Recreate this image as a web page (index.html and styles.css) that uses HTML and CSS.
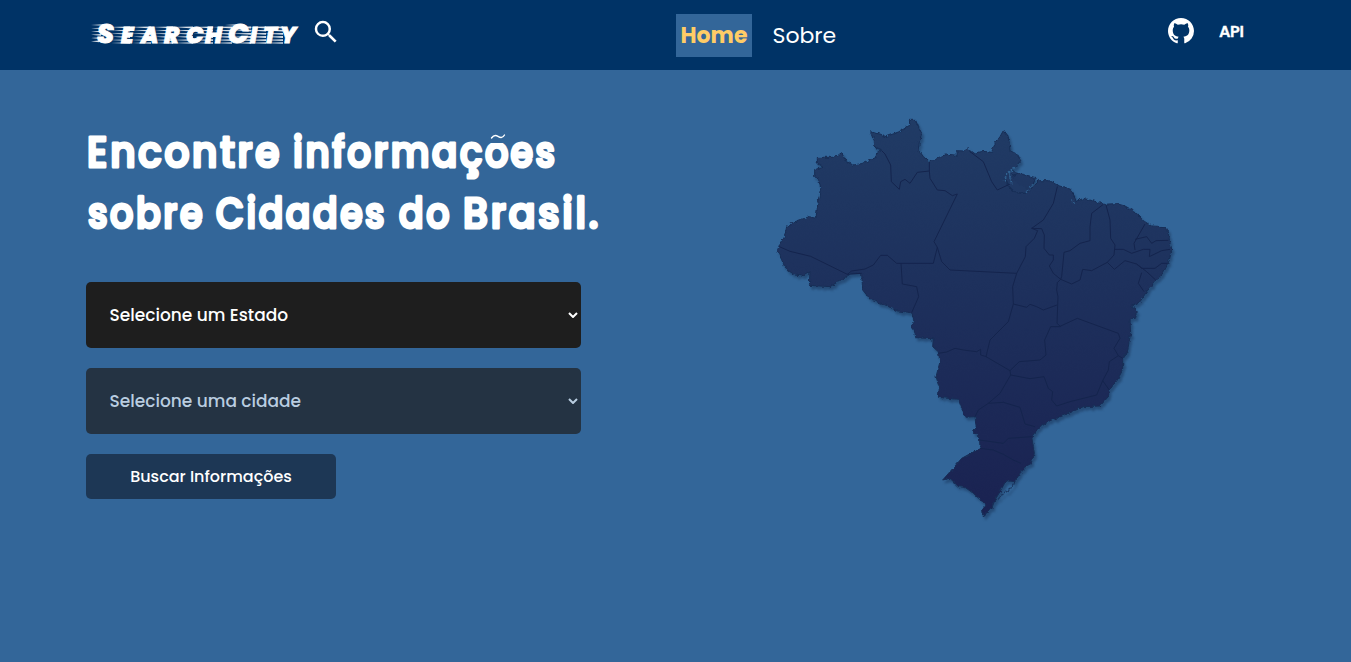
FILE: index.html
```html
<!DOCTYPE html>
<html lang="pt-BR">
<head>
<meta charset="utf-8">
<title>SearchCity</title>
<link rel="stylesheet" href="styles.css">
</head>
<body>
<header class="topbar">
  <a class="brand">
    <svg class="logo" width="211" height="30" viewBox="0 0 211 30">
      <defs>
        <g id="wind" fill="#fff">
          <path d="M0 0L20 -.5V1.4zM2 3.4L20 2.7V4.6zM0 6.6L20 5.9V7.8zM2 9.8L20 9.1V11zM0 13L20 12.2V14.1zM1 16L20 15.2V16.8z"/>
        </g>
      </defs>
      <g opacity=".85">
        <path fill="#fff" d="M0 8L16 7V9zM0 11.3L14 10.5V12.3zM0 14.5L12 13.7V15.5zM0 17.8L10 17V18.8zM0 21L9 20.2V22zM0 24.3L8 23.5V25.3zM134 8L150 7V9z"/>
        <use href="#wind" x="19" y="10"/><use href="#wind" x="40" y="10"/><use href="#wind" x="62" y="10"/>
        <use href="#wind" x="82" y="10"/><use href="#wind" x="102" y="10"/><use href="#wind" x="121" y="10"/>
        <use href="#wind" x="140" y="10"/><use href="#wind" x="155" y="10"/><use href="#wind" x="172" y="10"/>
      </g>
      <text class="logo-text" y="26"><tspan class="cap" x="6">S</tspan><tspan x="30 50 73 95 114">EARCH</tspan><tspan class="cap" x="137">C</tspan><tspan x="159 172 189">ITY</tspan></text>
    </svg>
    <svg class="search" width="30" height="30" viewBox="0 0 24 24"><path fill="#fff" d="M15.5 14h-.79l-.28-.27A6.47 6.47 0 0 0 16 9.5 6.5 6.5 0 1 0 9.5 16c1.61 0 3.09-.59 4.23-1.57l.27.28v.79l5 4.99L20.49 19l-4.99-5zm-6 0C7.01 14 5 11.99 5 9.5S7.01 5 9.5 5 14 7.01 14 9.5 11.99 14 9.5 14z"/></svg>
  </a>
  <nav class="nav"><a class="nav-link active">Home</a><a class="nav-link">Sobre</a></nav>
  <div class="links">
    <svg width="26" height="26" viewBox="0 0 16 16"><path fill="#fff" d="M8 0C3.58 0 0 3.58 0 8c0 3.54 2.29 6.53 5.47 7.59.4.07.55-.17.55-.38 0-.19-.01-.82-.01-1.49-2.01.37-2.53-.49-2.69-.94-.09-.23-.48-.94-.82-1.13-.28-.15-.68-.52-.01-.53.63-.01 1.08.58 1.23.82.72 1.21 1.87.87 2.33.66.07-.52.28-.87.51-1.07-1.78-.2-3.64-.89-3.64-3.95 0-.87.31-1.59.82-2.15-.08-.2-.36-1.02.08-2.12 0 0 .67-.21 2.2.82a7.6 7.6 0 0 1 4 0c1.53-1.04 2.2-.82 2.2-.82.44 1.1.16 1.92.08 2.12.51.56.82 1.27.82 2.15 0 3.07-1.87 3.75-3.65 3.95.29.25.54.73.54 1.48 0 1.07-.01 1.93-.01 2.2 0 .21.15.46.55.38A8.01 8.01 0 0 0 16 8c0-4.42-3.58-8-8-8z"/></svg>
    <span class="api">API</span>
  </div>
</header>
<main class="hero">
  <section class="intro">
    <h1 class="title">
      <svg class="title-art" width="520" height="122" viewBox="0 0 520 122">
        <defs><clipPath id="o-body"><rect x="396" y="22" width="32" height="40"/></clipPath></defs>
        <text x="1" y="45.500" textLength="195" lengthAdjust="spacingAndGlyphs">Encontre</text>
        <text x="207" y="45.500" textLength="192" lengthAdjust="spacingAndGlyphs">informaç</text>
        <text x="399" y="45.500" textLength="26" lengthAdjust="spacingAndGlyphs" clip-path="url(#o-body)">õ</text>
        <text x="424.500" y="45.500" textLength="47" lengthAdjust="spacingAndGlyphs">es</text>
        <path class="tilde" d="M405.5 17C408 13.5 410 14 412 15.3S416.500 17.500 418.500 14"/>
        <text x="2" y="106.500" textLength="117" lengthAdjust="spacingAndGlyphs">sobre</text>
        <text x="130" y="106.500" textLength="171" lengthAdjust="spacingAndGlyphs">Cidades</text>
        <text x="313" y="106.500" textLength="53" lengthAdjust="spacingAndGlyphs">do</text>
        <text x="377" y="106.500" textLength="138" lengthAdjust="spacingAndGlyphs">Brasil.</text>
      </svg>
    </h1>
    <div class="form">
      <div class="field"><span>Selecione um Estado</span><svg width="10" height="6" viewBox="0 0 10 6"><path class="chevron" d="M1 1l4 4 4-4"/></svg></div>
      <div class="field disabled"><span>Selecione uma cidade</span><svg width="10" height="6" viewBox="0 0 10 6"><path class="chevron" d="M1 1l4 4 4-4"/></svg></div>
      <button class="submit">Buscar Informações</button>
    </div>
  </section>
  <svg class="map" width="410" height="415" viewBox="0 0 1230 1245">
    <defs>
      <linearGradient id="land" x1="0" y1="0" x2="0" y2="1"><stop offset="0" stop-color="#203b65"/><stop offset="1" stop-color="#1a2251"/></linearGradient>
      <filter id="coast" x="-5%" y="-5%" width="110%" height="110%" color-interpolation-filters="sRGB"><feTurbulence type="fractalNoise" baseFrequency=".09" numOctaves="2" seed="4"/><feDisplacementMap in="SourceGraphic" scale="12" xChannelSelector="R" yChannelSelector="G"/></filter>
    </defs>
    <g filter="url(#coast)">
      <path fill="url(#land)" stroke="#172e56" stroke-width="3" stroke-linejoin="round" d="M418 31L437 31 445 50 455 70 448 95 445 118 460 140 478 156 500 146 515 138 535 133 562 136 560 122 580 123 592 116 610 130 640 124 665 127 672 105 690 80 701 60 712 75 718 95 720 122 740 132 752 152 740 168 728 178 735 190 760 193 797 203 790 222 780 240 795 225 808 212 835 212 862 225 885 232 902 238 915 262 918 275 940 265 975 274 1000 283 1040 281 1065 288 1095 305 1120 332 1145 348 1185 350 1195 372 1200 400 1205 420 1198 450 1192 465 1180 488 1155 515 1130 545 1110 575 1085 590 1098 600 1098 622 1080 630 1082 670 1072 725 1058 745 1058 780 1042 810 1018 840 1015 860 990 888 940 890 892 912 840 932 805 955 785 980 793 1030 785 1055 750 1090 735 1115 708 1112 690 1145 675 1170 665 1195 640 1218 638 1200 648 1185 610 1150 585 1132 565 1130 540 1105 518 1110 540 1085 575 1045 630 1015 628 980 608 965 618 950 615 920 585 922 575 895 565 868 505 862 508 830 498 800 510 755 505 725 488 710 490 686 437 683 433 660 425 650 433 635 425 608 380 602 340 582 302 570 278 540 275 490 245 490 232 498 180 530 118 526 120 483 95 498 75 495 45 475 40 460 22 422 30 400 45 375 50 350 75 335 118 320 138 325 145 270 152 235 145 205 134 200 134 178 160 172 142 162 142 142 190 142 205 135 215 128 228 155 250 165 280 160 318 142 320 128 335 120 315 112 312 90 302 65 318 70 330 72 348 80 385 66 405 55 420 45z"/>
      <path class="coastline" d="M735 1118L720 1138 695 1155 678 1175"/>
      <path class="shore" d="M705 200L712 222 722 235 735 248 765 250 780 240M720 182L730 200 745 190"/>
      <path class="inlet" d="M735 172L710 190 703 215M716 190L730 182M720 195L724 220M790 222L768 248M905 268L915 285"/>
    </g>
    <path class="border" d="M335 122L345 132 362 165 364 215 388 238 392 215 405 208 420 220 442 187 478 183 480 205 502 240 525 242 547 257 562 252 M478 156L478 183 M562 252L492 395 502 412 490 460 380 460 352 436 332 436 310 465 285 477 245 483 232 493 M28 410L60 424 122 439 232 493 275 490 M502 412L515 455 540 480 740 490 M393 460L397 522 440 530 446 560 M425 608L446 560 M600 125L640 155 665 215 682 240 720 222 M862 230L850 280 820 330 785 355 803 362 793 385 768 410 766 440 740 490 728 530 730 582 M785 355L815 356 823 375 822 415 838 435 850 435 850 450 838 468 850 490 872 508 M1000 283L965 310 960 350 960 392 930 400 900 422 882 427 875 500 872 508 M1008 285L1020 330 1022 385 1035 405 1032 435 1012 457 965 482 938 478 930 510 905 522 872 508 862 518 860 540 864 560 861 640 872 650 M1125 342L1092 400 1095 420 M1095 388L1130 380 1145 400 1158 392 1195 391 M1032 418L1060 418 1085 430 1120 418 1140 418 1138 440 1175 422 1200 418 M1012 457L1033 478 1065 452 1100 462 1115 475 1155 475 1175 460 1192 460 M1100 462L1130 485 1157 510 M1115 488L1105 520 1122 545 M730 582L770 592 780 583 800 590 820 600 861 585 M730 582L715 635 660 690 648 740 720 782 748 755 810 750 828 735 824 690 842 650 868 650 922 625 990 650 1045 670 1050 685 1032 715 1045 737 1018 755 1015 780 998 812 980 855 900 875 860 888 845 870 848 845 835 835 822 800 780 806 722 795 720 782 M722 795L690 850 655 880 625 900 615 920 M1045 737L1058 745 M998 812L1018 840 M505 730L530 726 555 715 580 720 620 725 632 718 632 735 650 740 M655 880L700 877 750 892 765 942 795 950 M628 990L700 1000 715 985 785 980 M630 1015L670 1020 700 1033 730 1050 753 1060"/>
  </svg>
</main>
</body>
</html>
```
FILE: styles.css
```css
* { box-sizing: border-box; }
body { margin: 0; height: 662px; overflow: hidden; background: #336699; color: #fff; font-family: Poppins, Inter, sans-serif; }
.topbar { display: grid; grid-template-columns: 585px 1fr auto; height: 70px; padding: 0 107px 0 91px; background: #003366; }
.brand { display: flex; gap: 9px; padding-top: 17px; }
.logo { overflow: visible; }
.logo-text { font: italic 800 23px Poppins, "Open Sans", sans-serif; fill: #fff; stroke: #fff; stroke-width: .9; }
.cap { font-size: 27px; }
.nav { display: flex; align-items: flex-start; gap: 16px; padding-top: 14px; }
.nav-link { height: 43px; padding: 0 4.500px; font-size: 22px; line-height: 43px; }
.active { width: 76px; background: #336699; color: #ffcc66; font-weight: 700; white-space: nowrap; }
.links { display: flex; align-items: flex-start; gap: 25px; padding-top: 18px; }
.api { padding-top: 1px; font-size: 16px; font-weight: 600; line-height: 25px; width: 25px; letter-spacing: -.4px; -webkit-text-stroke: .3px #fff; }
.hero { display: flex; justify-content: space-between; padding: 40px 171px 0 86px; }
.intro { padding-top: 11px; }
.title { margin: 0; height: 122px; }
.title-art { display: block; overflow: visible; font: 500 42.500px Poppins, sans-serif; letter-spacing: 3px; fill: #fff; stroke: #fff; stroke-width: 3.200; stroke-linejoin: round; stroke-linecap: round; }
.tilde { fill: none; stroke: #fff; stroke-width: 1.4; }
.form { display: flex; flex-direction: column; gap: 20px; padding-top: 39px; }
.field { display: flex; align-items: center; justify-content: space-between; width: 495px; height: 66px; padding: 0 3px 0 23.500px; border-radius: 5px; background: #1e1e1e; font-size: 17px; font-weight: 500; }
.disabled { background: #243343; color: #b9cde0; }
.chevron { fill: none; stroke: currentColor; stroke-width: 2; }
.submit { width: 250px; height: 45px; border: 0; border-radius: 5px; background: #1d3755; color: #fff; font: 500 16px Poppins, Inter, sans-serif; }
.map { filter: drop-shadow(2px 3px 1px rgba(20, 45, 80, .45)); }
.border { fill: none; stroke: #14244d; stroke-width: 3; }
.coastline { fill: none; stroke: #1b3862; stroke-width: 4; }
.shore { fill: #203964; stroke: #172e56; stroke-width: 4; }
.inlet { fill: none; stroke: #316291; stroke-width: 5; stroke-dasharray: 6 4; }
```
